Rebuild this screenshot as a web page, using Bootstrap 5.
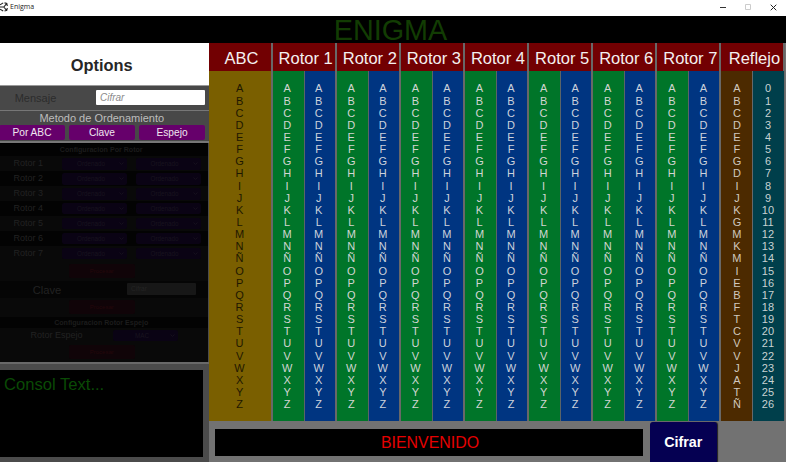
<!DOCTYPE html>
<html lang="es">
<head>
<meta charset="utf-8">
<title>Enigma</title>
<link href="https://cdn.jsdelivr.net/npm/bootstrap@5.3.0/dist/css/bootstrap.min.css" rel="stylesheet">
<style>
body{width:786px;height:462px;overflow:hidden;background:#727272;font-family:"Liberation Sans",Arial,sans-serif;font-size:11px;line-height:1}
.win-bar{height:16px;background:#fff;font:7px/14px "Open Sans","Noto Sans",sans-serif;color:#222}
.win-title{padding-left:2px}
.win-brand{padding-bottom:2px}
.win-ctl{gap:19px;padding-right:9px;padding-bottom:2px}
.banner{height:27.4px;background:#000;color:#123c03;font-size:28.8px;line-height:28px;padding-right:5px}
.side{width:208.5px;height:418.6px;background:#4b4b4b}
.opt-title{height:42.6px;background:#fff;color:#262626;font-size:16.4px;padding-right:5px;padding-top:2px;border-bottom:1px solid #999}
.msg{height:25px;background:#484848;border-bottom:1px solid #777;color:#2c2c2c;font-size:11px}
.msg-label{width:71px;padding-top:2px}
.msg-input{width:109px;height:15px;background:#fff;color:#8a8a8a;font-size:10px;font-style:italic;line-height:16px;padding:0 4px;border-radius:1px;margin-left:25px}
.method{height:32px;background:#484848;border-bottom:2px solid #777}
.method-title{color:#bdbdbd;font-size:11px;height:14px;line-height:14px;padding-right:5px}
.method-btns{gap:4px;margin-left:-1px}
.btn-method{width:66px;height:15px;background:#66006b;color:#f0e6f0;font-size:10.2px;line-height:15px;padding:0;border:0;border-radius:2px}
.config{height:219px;width:207.5px;background:#090909;color:#222;border-top:1px solid #000}
.sec-title{background:#030303;color:#1c1c1c;font-size:7.1px;font-weight:bold;padding-right:5px}
.rotor-row{height:14.93px;padding-left:13.5px;font-size:9px}
.rotor-row:nth-child(even){background:#030303}
.rotor-name{width:48.5px}
.drop{width:65px;height:11.5px;background:#0a0314;color:#19141f;font-size:6.3px;line-height:12px;position:relative;border-radius:2px;padding-right:7px}
.drop svg{position:absolute;right:3px;top:4px}
.drop+.drop{margin-left:8.5px}
.proc-row{height:19px;padding-right:4px}
.proc-first{height:20px}
.proc{width:66px;height:14px;background:#100408;color:#25070b;font-size:6px;line-height:14px;border-radius:2px}
.clave-row{height:17px;background:#050505;font-size:11.2px}
.clave-name{width:94px;padding-top:2px}
.clave-input{width:69px;height:12px;background:#171717;color:#242424;font-size:6.5px;line-height:12px;margin-left:33px;padding-left:4px;border-radius:1px}
.edge{height:8px;border-top:2px solid #696969;background:#4b4b4b}
.consol{width:203px;height:87px;background:#000;color:#0a4a05;font-size:16.6px;padding:7px 4px}
.board{width:577.5px;height:377.6px}
.wheel{width:64.12px;border-right:2px solid #686868}
.wheel-head{height:27.6px;background:#720002;color:#f4f0f0;font-size:16.5px;line-height:31px;padding-left:4px}
.lane{padding-top:11.5px;white-space:pre-line;line-height:12.14px;font-size:11px;text-align:center;color:#d2d6d2}
.lane-abc{background:#7a5f00;color:#1e1800}
.lane-green{background:#007529;padding-right:2px}
.lane-blue{background:#003581;border-left:1.5px solid #5b6468;color:#ccd2dc;padding-right:2px}
.lane-brown{background:#4c2a00;color:#d0c8be}
.lane-teal{background:#003f4b;border-left:1.5px solid #66686a;color:#c8d2d2;padding-right:1px}
.foot{height:41px;padding-left:6.5px}
.welcome{width:428px;height:27px;margin-top:8.5px;background:#000;color:#e60000;font-size:15.9px;line-height:28px;padding-left:2px}
.btn-go{width:66.5px;height:40px;background:#050052;color:#fff;font-size:14.3px;font-weight:bold;border:0;border-radius:3px 3px 0 0;margin:1px 0 0 7px;padding:2px 0 0;box-shadow:1px 0 1px #222}
.btn-go:hover{background:#0a0070;color:#fff}
</style>
</head>
<body>
<header class="win-bar d-flex justify-content-between">
  <div class="win-brand d-flex align-items-center">
    <svg width="8" height="10" viewBox="0 0 8 10" fill="none" stroke="#222" stroke-width="1.1"><path d="M0 2.8 3.2.9M4.5.9 6.8 1.5 7.3 4M7.3 6 6.8 8.4 4.5 9M3.2 9 0 7.2M0 5h3.8L6.6 1.6M3.8 5l2.8 3.3"/></svg>
    <span class="win-title">Enigma</span>
  </div>
  <div class="win-ctl d-flex align-items-center">
    <svg width="6" height="6"><path d="M0 3.5h6" stroke="#333"/></svg>
    <svg width="6" height="6"><path d="M.5.5h5v5h-5z" fill="none" stroke="#ccc"/></svg>
    <svg width="7" height="7"><path d="M.7.7 6.3 6.3M6.3.7.7 6.3" stroke="#222"/></svg>
  </div>
</header>
<div class="banner text-center">ENIGMA</div>
<div class="d-flex">
  <aside class="side flex-shrink-0">
    <div class="opt-title d-flex align-items-center justify-content-center fw-bold">Options</div>
    <div class="msg d-flex align-items-center"><span class="msg-label text-center">Mensaje</span><div class="msg-input">Cifrar</div></div>
    <div class="method">
      <div class="method-title text-center">Metodo de Ordenamiento</div>
      <div class="method-btns d-flex"><button class="btn btn-method">Por ABC</button><button class="btn btn-method">Clave</button><button class="btn btn-method">Espejo</button></div>
    </div>
    <div class="config">
      <div class="sec-title text-center" style="height:12.5px;line-height:12px">Configuracion Por Rotor</div>
      <div id="rotors"></div>
      <div class="proc-row proc-first d-flex justify-content-center align-items-center"><div class="proc text-center">Procesar</div></div>
      <div class="clave-row d-flex align-items-center"><span class="clave-name text-center">Clave</span><div class="clave-input">Cifrar</div></div>
      <div class="proc-row d-flex justify-content-center align-items-center"><div class="proc text-center">Procesar</div></div>
    </div>
    <div class="edge"></div>
    <div class="consol">Consol Text...</div>
  </aside>
  <main>
    <div class="board d-flex" id="board"></div>
    <div class="foot d-flex"><div class="welcome text-center">BIENVENIDO</div><button class="btn btn-go">Cifrar</button></div>
  </main>
</div>
<script>
const abc=[...'ABCDEFGHIJKLMNÑOPQRSTUVWXYZ'];
const mirror=[...'ABCDEFGDIJKGMKMIEBFTCVVJATÑ'];
const lane=(cls,items)=>`<div class="lane flex-fill w-50 ${cls}">${items.join('\n')}</div>`;
const wheel=(name,lanes)=>`<section class="wheel d-flex flex-column flex-shrink-0"><div class="wheel-head text-center text-nowrap">${name}</div><div class="d-flex flex-grow-1">${lanes}</div></section>`;
let html=wheel('ABC',lane('lane-abc',abc));
for(let i=1;i<8;i++)html+=wheel('Rotor '+i,lane('lane-green',abc)+lane('lane-blue',abc));
html+=wheel('Reflejo',lane('lane-brown',mirror)+lane('lane-teal',abc.map((_,i)=>i)));
document.getElementById('board').innerHTML=html;
const drop=t=>`<div class="drop text-center">${t}<svg width="5" height="4"><path d="M.5.5 2.5 2.5 4.5.5" fill="none" stroke="#150f1c"/></svg></div>`;
document.getElementById('rotors').innerHTML=[1,2,3,4,5,6,7].map(i=>`<div class="rotor-row d-flex align-items-center"><span class="rotor-name">Rotor ${i}</span>${drop('Ordenado')}${drop('Ordenado')}</div>`).join('');
const cfg=document.querySelector('.config');
cfg.insertAdjacentHTML('beforeend',`<div class="sec-title text-center" style="height:11px;line-height:12px">Configuracion Rotor Espejo</div><div class="d-flex align-items-center" style="height:15px"><span class="text-center" style="width:113px;font-size:9px">Rotor Espejo</span>${drop('MAC')}</div><div class="proc-row d-flex justify-content-center align-items-center"><div class="proc text-center">Procesar</div></div>`);
</script>
<script src="https://cdn.jsdelivr.net/npm/bootstrap@5.3.0/dist/js/bootstrap.bundle.min.js"></script>
</body>
</html>
